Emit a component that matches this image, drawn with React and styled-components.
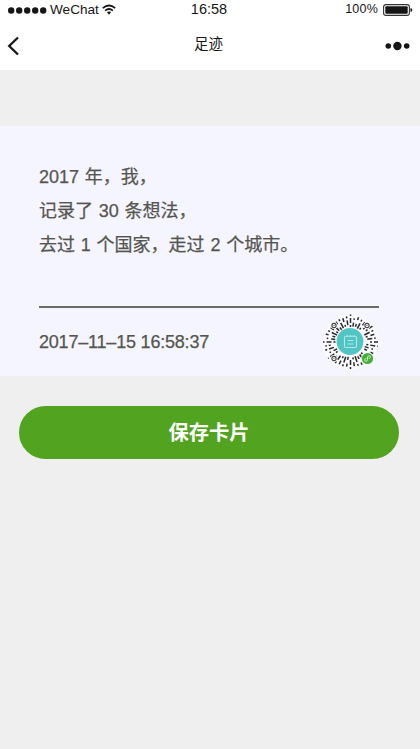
import React from 'react';
import styled, { createGlobalStyle } from 'styled-components';

const GlobalStyle = createGlobalStyle`
  body {
    margin: 0;
    background-color: #efefef;
    font-family: "Liberation Sans", "Noto Sans CJK SC", sans-serif;
  }
`;

const Page = styled.div`
  min-height: 749px;
`;

const Header = styled.header`
  background-color: #fff;
  color: #161616;
  height: 70px;
`;

const StatusBar = styled.div`
  align-items: center;
  display: grid;
  grid-template-columns: 1fr auto 1fr;
  height: 19px;
  padding: 0 7px 0 8px;
`;

const StatusGroup = styled.div`
  align-items: center;
  display: flex;
  gap: ${props => props.$gap};
  justify-content: ${props => (props.$end ? 'flex-end' : 'flex-start')};
`;

const StatusText = styled.span`
  font-size: ${props => props.$size};
  letter-spacing: ${props => props.$spacing || 0};
  line-height: 19px;
`;

const Clock = styled(StatusText)`
  margin-right: 3px;
`;

const NavBar = styled.div`
  align-items: center;
  display: grid;
  grid-template-columns: 1fr auto 1fr;
  height: 51px;
  padding: 0 10px 0 7px;
`;

const NavTitle = styled.h1`
  font-size: 14.5px;
  font-weight: 400;
  line-height: 51px;
  margin: 0;
`;

const NavButton = styled.button`
  background: none;
  border: 0;
  display: flex;
  justify-self: ${props => (props.$end ? 'end' : 'start')};
  padding: 2px 0 0;
`;

const Card = styled.section`
  background-color: #f5f5ff;
  box-sizing: border-box;
  color: #55554f;
  height: 250px;
  margin-top: 56px;
  padding: 34px 41px 0 39px;
`;

const Line = styled.p`
  font-size: 18px;
  line-height: 34px;
  margin: 0;
  -webkit-text-stroke: 0.25px #55554f;
  white-space: nowrap;
  word-spacing: 0.8px;
`;

const CardFooter = styled.div`
  align-items: center;
  border-top: 2px solid #6b6b68;
  display: flex;
  height: 68px;
  justify-content: space-between;
  margin-top: 44px;
`;

const DateText = styled.time`
  font-size: 18px;
  letter-spacing: -0.2px;
  -webkit-text-stroke: 0.25px #55554f;
`;

const SaveButton = styled.button`
  background-color: #52a31f;
  border: 0;
  border-radius: 27px;
  color: #fff;
  display: block;
  font-family: inherit;
  font-size: 20.3px;
  font-weight: 700;
  height: 53px;
  margin: 30px 21px 0 19px;
  padding: 0 0 4px;
  width: 380px;
`;

// dash pattern of each ray, repeated around the code
const rayPatterns = [
  '2 2 5 2 1.5 9',
  '6 2 2 9',
  '0 4 2 2 4 9',
  '3 4 3 9',
  '0 2 5 2 2 9',
  '4 3 1.5 9',
  '2 3 4 9',
];

const finders = [[11.5, 11.5], [44.5, 11.5], [11.5, 44.5]];

const SignalDots = () => (
  <svg width="39" height="8" viewBox="0 0 39 8">
    {[3.2, 11.2, 19.2, 27.2, 35.2].map(x => (
      <circle key={x} cx={x} cy="4.5" r="3.2" fill="#161616" />
    ))}
  </svg>
);

const WifiIcon = () => (
  <svg width="14" height="11" viewBox="0 0 14 11" fill="none" stroke="#161616" strokeWidth="1.7">
    <path d="M0.8 4.2Q7 -1.2 13.2 4.2" />
    <path d="M3.1 6.7Q7 3.3 10.9 6.7" />
    <path d="M4.8 8.1Q7 6.7 9.2 8.1L7 10.7Z" fill="#161616" stroke="none" />
  </svg>
);

const BatteryIcon = () => (
  <svg width="30" height="12" viewBox="0 0 30 12">
    <rect x="0.6" y="0.6" width="25.8" height="10.8" rx="2.4" fill="none" stroke="#333" strokeWidth="1.1" />
    <rect x="2.3" y="2.3" width="22.4" height="7.4" rx="1" fill="#161616" />
    <path d="M27.5 4Q29.4 4.5 29.4 6T27.5 8Z" fill="#161616" />
  </svg>
);

const BackIcon = () => (
  <svg width="13" height="20" viewBox="0 0 13 20" fill="none">
    <path d="M11 1.5L2.2 10L11 18.5" stroke="#161616" strokeWidth="2.3" />
  </svg>
);

const MoreIcon = () => (
  <svg width="25" height="10" viewBox="0 0 25 10" fill="#161616">
    <circle cx="3.3" cy="5" r="2.8" />
    <circle cx="12.4" cy="5" r="4.2" />
    <circle cx="21.7" cy="5" r="2.8" />
  </svg>
);

const MiniProgramCode = () => (
  <svg width="57" height="56" viewBox="0 0 56 56" fill="none">
    <circle cx="28" cy="28" r="27.5" fill="#fff" fillOpacity="0.5" />
    {Array.from({ length: 40 }, (_, i) => (
      <path
        key={i}
        d={`M28 ${13 - (i % 3) * 0.5}V${i % 4 === 1 ? 2.5 : 0.3}`}
        stroke="#292929"
        strokeWidth="1.5"
        strokeDasharray={rayPatterns[(i * 5 + Math.floor(i / 7)) % rayPatterns.length]}
        transform={`rotate(${i * 9} 28 28)`}
      />
    ))}
    {finders.map(([x, y]) => (
      <g key={`${x}-${y}`}>
        <circle cx={x} cy={y} r="3.4" fill="#fafaff" />
        <circle cx={x} cy={y} r="2.1" fill="#fff" stroke="#444" strokeWidth="1.1" />
        <circle cx={x} cy={y} r="0.6" fill="#444" />
      </g>
    ))}
    <circle cx="27.5" cy="27.5" r="13.4" fill="#50c5c3" />
    <rect x="22" y="22.3" width="12" height="11.2" rx="1.2" stroke="#b5e8e6" strokeWidth="1.1" />
    <path d="M24.7 21v2M28 21v2M31.3 21v2M25 26.5h6M25 30h6" stroke="#b5e8e6" />
    <circle cx="45" cy="44.5" r="6.4" fill="#f5f5ff" />
    <circle cx="45" cy="44.5" r="5.6" fill="#48ad37" />
    <path
      d="M43.8 44.7C41.9 44.1 41.5 47.1 43.3 47.2C44.7 47.2 45 46.3 45 45.3V43.7C45 42.7 45.4 41.8 46.7 41.8C48.5 41.9 48.1 44.9 46.2 44.3"
      stroke="#e4f8e1"
      strokeWidth="0.9"
    />
  </svg>
);

const App = () => (
  <Page>
    <GlobalStyle />
    <Header>
      <StatusBar>
        <StatusGroup $gap="3px">
          <SignalDots />
          <StatusText $size="13.6px">WeChat</StatusText>
          <WifiIcon />
        </StatusGroup>
        <Clock $size="14.5px">16:58</Clock>
        <StatusGroup $gap="5px" $end>
          <StatusText $size="12.5px" $spacing="0.2px">100%</StatusText>
          <BatteryIcon />
        </StatusGroup>
      </StatusBar>
      <NavBar>
        <NavButton aria-label="返回">
          <BackIcon />
        </NavButton>
        <NavTitle>足迹</NavTitle>
        <NavButton aria-label="更多" $end>
          <MoreIcon />
        </NavButton>
      </NavBar>
    </Header>

    <Card>
      <Line>2017 年，我，</Line>
      <Line>记录了 30 条想法，</Line>
      <Line>去过 1 个国家，走过 2 个城市。</Line>
      <CardFooter>
        <DateText>2017–11–15 16:58:37</DateText>
        <MiniProgramCode />
      </CardFooter>
    </Card>

    <SaveButton>保存卡片</SaveButton>
  </Page>
);

export default App;
